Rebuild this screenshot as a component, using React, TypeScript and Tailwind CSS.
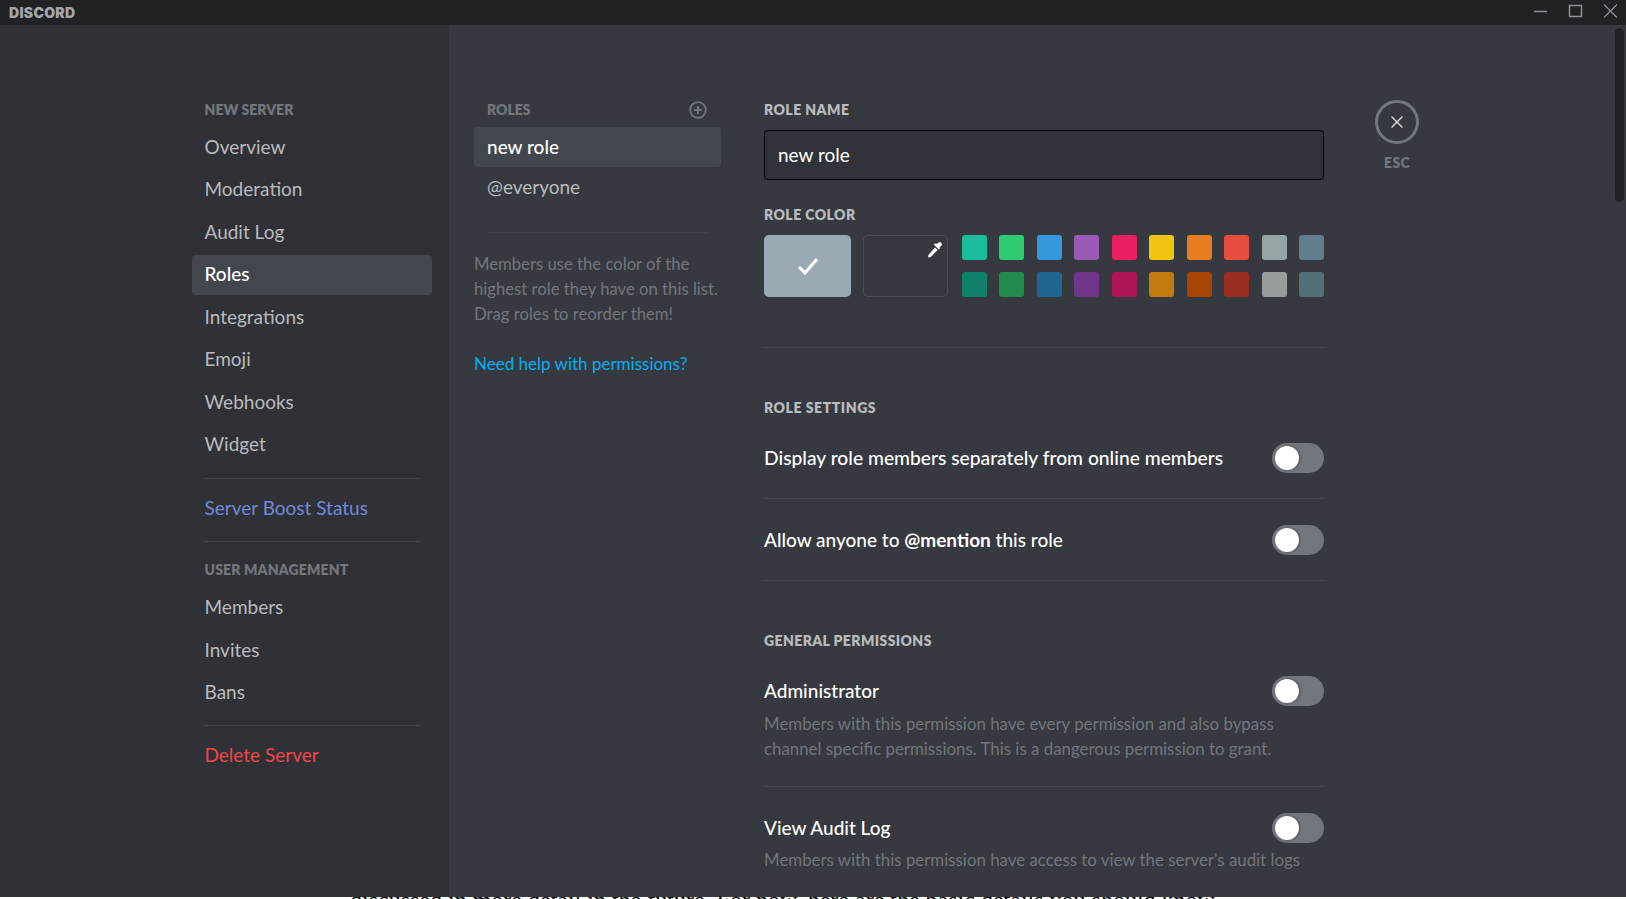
import { X } from "lucide-react";

const sans = "font-['Lato','Noto_Sans',sans-serif]";

const row1 = ["#1abc9c", "#2ecc71", "#3498db", "#9b59b6", "#e91e63", "#f1c40f", "#e67e22", "#e74c3c", "#95a5a6", "#607d8b"];
const row2 = ["#11806a", "#1f8b4c", "#206694", "#71368a", "#ad1457", "#c27c0e", "#a84300", "#992d22", "#979c9f", "#546e7a"];

function NavItem({ label, active, color }: { label: string; active?: boolean; color?: string }) {
  return (
    <div
      className={`h-10 mb-[2.5px] px-[12.5px] flex items-center rounded-[4px] text-[19px] ${
        active ? "bg-[#42464d] text-white font-medium" : color || "text-[#b9bbbe]"
      }`}
    >
      {label}
    </div>
  );
}

function Heading({ children, className }: { children: React.ReactNode; className?: string }) {
  return <div className={`text-[14px] leading-[18px] font-extrabold uppercase ${className}`}>{children}</div>;
}

function Toggle() {
  return (
    <div className="w-[52px] h-[30px] rounded-full bg-[#72767d] flex items-center pl-[3px] shrink-0">
      <div className="w-6 h-6 rounded-full bg-white shadow-[1px_0_3px_rgba(0,0,0,0.35)]" />
    </div>
  );
}

export default function App() {
  return (
    <div className={`w-[1626px] h-[899px] overflow-hidden flex flex-col bg-white ${sans}`}>
      <div className="h-[25px] shrink-0 bg-[#202225] flex items-center justify-between pl-[9px]">
        <span className="font-['Inter',sans-serif] text-[14px] leading-none font-black tracking-[0.3px] text-[#a3a6aa]">DISCORD</span>
        <div className="flex items-center h-full">
          <svg width="104" height="25" viewBox="0 0 104 25" fill="none" stroke="#8e9297">
            <path d="M12 11.5h13" strokeWidth="1.5" />
            <rect x="47.5" y="5.5" width="12" height="11" strokeWidth="1.5" />
            <path d="M82 4.5l13 13M95 4.5l-13 13" strokeWidth="1.2" />
          </svg>
        </div>
      </div>

      <div className="h-[872px] shrink-0 flex">
        <div className="w-[449px] shrink-0 bg-[#2f3136] pl-[192px] pr-[17px] pt-[76px]">
          <Heading className="px-[12.5px] text-[#72767d] mb-[8px]">New Server</Heading>
          <NavItem label="Overview" />
          <NavItem label="Moderation" />
          <NavItem label="Audit Log" />
          <NavItem label="Roles" active />
          <NavItem label="Integrations" />
          <NavItem label="Emoji" />
          <NavItem label="Webhooks" />
          <NavItem label="Widget" />
          <div className="mx-[12px] mt-[13px] h-px bg-[#3f4248]" />
          <div className="mt-[10px]">
            <NavItem label="Server Boost Status" color="text-[#7289da]" />
          </div>
          <div className="mx-[12px] mt-[12px] h-px bg-[#3f4248]" />
          <Heading className="px-[12.5px] text-[#72767d] mt-[19px] mb-[9px] tracking-[0.15px]">User Management</Heading>
          <NavItem label="Members" />
          <NavItem label="Invites" />
          <NavItem label="Bans" />
          <div className="mx-[12px] mt-[12px] h-px bg-[#3f4248]" />
          <div className="mt-[10px]">
            <NavItem label="Delete Server" color="text-[#f04747]" />
          </div>
        </div>

        <div className="flex-1 bg-[#36393f] flex relative">
          <div className="w-[247px] ml-[25px] pt-[76px] shrink-0">
            <div className="flex items-center justify-between pl-[13px] pr-[14px] mb-[8px]">
              <Heading className="text-[#72767d]">Roles</Heading>
              <svg width="18" height="18" viewBox="0 0 18 18" fill="none">
                <circle cx="9" cy="9" r="7.8" stroke="#72767d" strokeWidth="1.8" />
                <path d="M9 5v8M5 9h8" stroke="#72767d" strokeWidth="2" />
              </svg>
            </div>
            <div className="h-10 px-[13px] flex items-center rounded-[4px] text-[19px] font-medium bg-[#42464d] text-white">new role</div>
            <div className="h-10 px-[13px] flex items-center text-[19px] text-[#b9bbbe]">@everyone</div>
            <div className="ml-[13px] mr-[12px] mt-[25px] h-px bg-[#3f4248]" />
            <p className="mt-[19px] text-[16.7px] leading-[25px] text-[#72767d]">
              Members use the color of the
              <br />
              highest role they have on this list.
              <br />
              Drag roles to reorder them!
            </p>
            <div className="mt-[24px] text-[17px] leading-[25px] text-[#00b0f4]">Need help with permissions?</div>
          </div>

          <div className="w-[560px] ml-[43px] pt-[76px] shrink-0">
            <Heading className="text-[#b9bbbe] tracking-[0.45px]">Role Name</Heading>
            <div className="mt-[11px] h-[50px] rounded-[4px] border border-black/90 bg-[#303339] px-[13px] flex items-center text-[19px] text-white">new role</div>
            <Heading className="text-[#b9bbbe] mt-[26px] tracking-[0.45px]">Role Color</Heading>
            <div className="mt-[11px] flex h-[62px]">
              <div className="w-[87px] rounded-[5px] bg-[#99aab5] flex items-center justify-center">
                <svg width="22" height="18" viewBox="0 0 22 18" fill="none">
                  <path d="M2 10l6 6L20 2" stroke="white" strokeWidth="3" />
                </svg>
              </div>
              <div className="w-[85px] ml-[12px] rounded-[5px] border border-[#4a4d54] relative">
                <svg className="absolute right-[3px] top-[5px]" width="18" height="18" viewBox="0 0 18 18" fill="white">
                  <path d="M11.5 2.5c1-1.4 2.8-1.8 3.8-.8s.6 2.8-.8 3.8l-1 .9.7.8-1.4 1.4-5-5 1.4-1.4.8.7 1.5-.4zM9 6.5l2.6 2.6-6.4 6.4c-.9.9-1.4.5-2.4 1l-.8-.8c.5-1 .1-1.5 1-2.4L9 6.5z" />
                </svg>
              </div>
              <div className="ml-[14px] flex-1 flex flex-col justify-between">
                {[row1, row2].map((row, i) => (
                  <div key={i} className="flex justify-between">
                    {row.map((c) => (
                      <div key={c} className="w-[25px] h-[25px] rounded-[3px]" style={{ backgroundColor: c }} />
                    ))}
                  </div>
                ))}
              </div>
            </div>
            <div className="mt-[50px] h-px bg-[#44474e]" />
            <Heading className="text-[#b9bbbe] mt-[51px] tracking-[0.55px]">Role Settings</Heading>
            <div className="mt-[26px] flex items-center justify-between text-[19.25px] font-medium text-white h-[30px]">
              <span>Display role members separately from online members</span>
              <Toggle />
            </div>
            <div className="mt-[25px] h-px bg-[#44474e]" />
            <div className="mt-[26px] flex items-center justify-between text-[19px] font-medium text-white h-[30px]">
              <span>
                Allow anyone to <b>@mention</b> this role
              </span>
              <Toggle />
            </div>
            <div className="mt-[25px] h-px bg-[#44474e]" />
            <Heading className="text-[#b9bbbe] mt-[51px] tracking-[0.4px]">General Permissions</Heading>
            <div className="mt-[26px] flex items-center justify-between text-[19px] font-medium text-white h-[30px]">
              <span>Administrator</span>
              <Toggle />
            </div>
            <p className="mt-[5px] text-[16.85px] leading-[25px] text-[#72767d]">
              Members with this permission have every permission and also bypass
              <br />
              channel specific permissions. This is a dangerous permission to grant.
            </p>
            <div className="mt-[25px] h-px bg-[#44474e]" />
            <div className="mt-[26px] flex items-center justify-between text-[19px] font-medium text-white h-[30px]">
              <span>View Audit Log</span>
              <Toggle />
            </div>
            <p className="mt-[4px] text-[16.85px] leading-[25px] text-[#72767d]">
              Members with this permission have access to view the server's audit logs
            </p>
          </div>

          <div className="ml-[51px] pt-[75px] w-[44px] flex flex-col items-center shrink-0">
            <div className="w-[44px] h-[44px] rounded-full border-[3px] border-[#72767d] flex items-center justify-center">
              <X size={20} strokeWidth={1.6} color="#dcddde" />
            </div>
            <div className="mt-[10px] text-[14px] leading-[18px] font-extrabold tracking-[0.3px] text-[#72767d]">ESC</div>
          </div>

          <div className="absolute right-[2px] top-[3px] w-[9px] h-[174px] rounded-full bg-[#202225]" />
        </div>
      </div>

      <div className="h-[2px] overflow-hidden bg-white flex justify-start pl-[350px]">
        <span className="font-['Liberation_Serif',serif] text-[24px] leading-[24px] -mt-[9px] text-black whitespace-nowrap">
          discussed in more detail in the future. For now, here are the basic details you should know
        </span>
      </div>
    </div>
  );
}
